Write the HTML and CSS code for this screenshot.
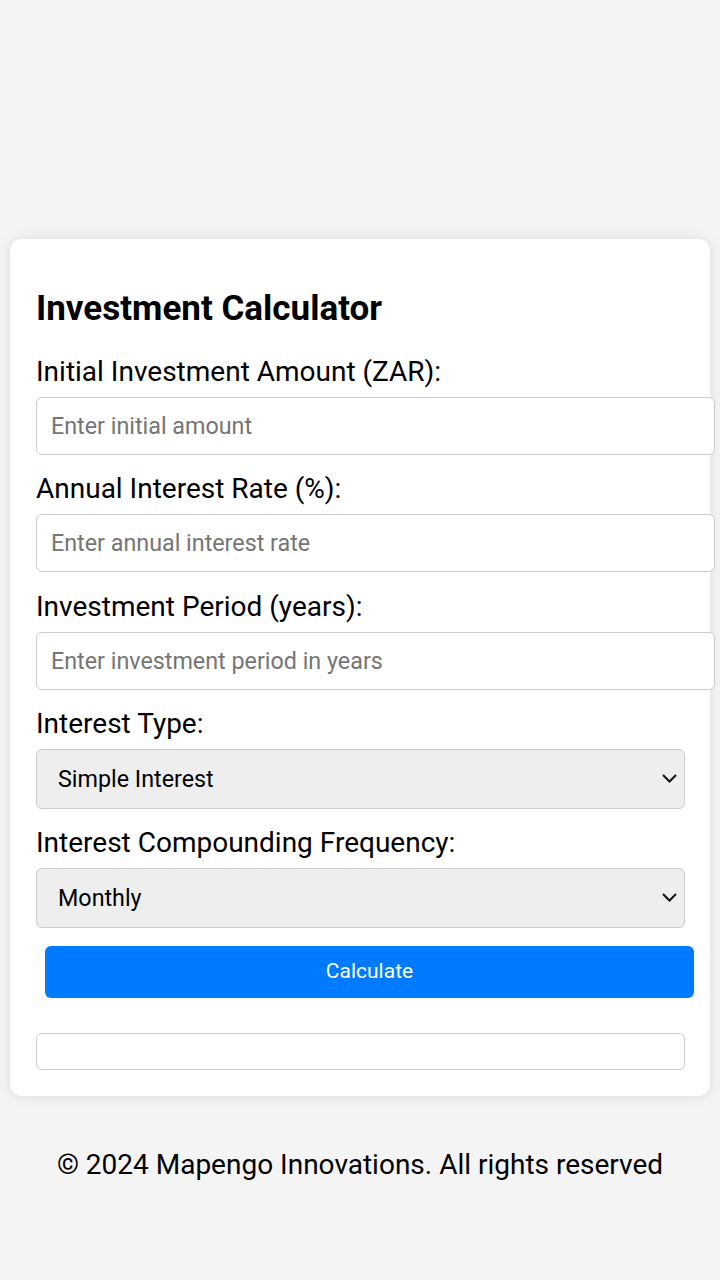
FILE: index.html
```html
<!DOCTYPE html>
<html lang="en">
<head>
<meta charset="utf-8">
<title>Investment Calculator</title>
<link rel="stylesheet" href="styles.css">
</head>
<body>
<main class="card">
  <h2 class="title">Investment Calculator</h2>
  <label class="label" for="amount">Initial Investment Amount (ZAR):</label>
  <input class="field" id="amount" type="text" placeholder="Enter initial amount">
  <label class="label" for="rate">Annual Interest Rate (%):</label>
  <input class="field" id="rate" type="text" placeholder="Enter annual interest rate">
  <label class="label" for="period">Investment Period (years):</label>
  <input class="field" id="period" type="text" placeholder="Enter investment period in years">
  <label class="label" for="type">Interest Type:</label>
  <div class="select">
    <span class="select-text">Simple Interest</span>
    <svg class="chev" width="15" height="9" viewBox="0 0 15 9"><path d="M1 1 L7.5 7.5 L14 1" fill="none" stroke="#111" stroke-width="2"/></svg>
  </div>
  <label class="label" for="freq">Interest Compounding Frequency:</label>
  <div class="select">
    <span class="select-text">Monthly</span>
    <svg class="chev" width="15" height="9" viewBox="0 0 15 9"><path d="M1 1 L7.5 7.5 L14 1" fill="none" stroke="#111" stroke-width="2"/></svg>
  </div>
  <button class="btn" type="button">Calculate</button>
  <div class="result"></div>
</main>
<footer class="footer">© 2024 Mapengo Innovations. All rights reserved</footer>
</body>
</html>
```
FILE: styles.css
```css
html, body {
  margin: 0;
  padding: 0;
}
body {
  background: #f4f4f4;
  font-family: Roboto, "Noto Sans", sans-serif;
  color: #000;
  padding-top: 239px;
  min-height: 1280px;
  box-sizing: border-box;
}
.card {
  display: flex;
  flex-direction: column;
  margin: 0 10px;
  background: #fff;
  border-radius: 12px;
  box-shadow: 0 0 14px rgba(0,0,0,0.10);
  padding: 28px 26px 26px 26px;
}
.title {
  margin: 20.5px 0 26.5px;
  font-size: 35px;
  font-weight: 700;
  line-height: 41px;
}
.label {
  font-size: 28px;
  line-height: 34px;
  margin-bottom: 8px;
}
.field {
  box-sizing: border-box;
  width: 679px;
  height: 58px;
  padding: 0 14px;
  border: 1px solid #ccc;
  border-radius: 6px;
  font-family: Roboto, sans-serif;
  font-size: 23.3px;
  margin-bottom: 17.25px;
  color: #000;
  background: #fff;
}
.field::placeholder {
  color: #757575;
}
.select {
  box-sizing: border-box;
  width: 649px;
  height: 60px;
  border: 1px solid #ccc;
  border-radius: 6px;
  background: #eee;
  display: flex;
  align-items: center;
  justify-content: space-between;
  padding: 0 7px 0 21px;
  margin-bottom: 17px;
}
.select-text {
  font-size: 23.3px;
}
.btn {
  align-self: flex-start;
  margin: 1px 0 35px 9px;
  width: 649px;
  height: 52px;
  padding: 0 6px 2px;
  border: none;
  border-radius: 6px;
  background: #007bff;
  color: #fff;
  font-family: Roboto, sans-serif;
  font-size: 21px;
}
.result {
  box-sizing: border-box;
  width: 649px;
  height: 37px;
  border: 1px solid #ccc;
  border-radius: 6px;
}
.footer {
  text-align: center;
  font-size: 28px;
  margin-top: 52.5px;
  line-height: 34px;
}
```
